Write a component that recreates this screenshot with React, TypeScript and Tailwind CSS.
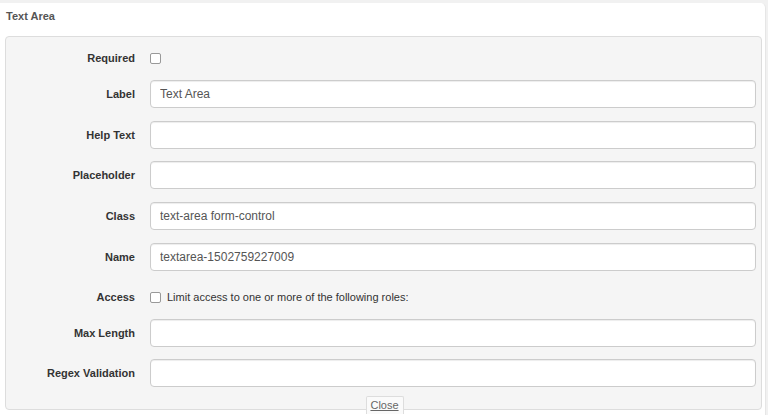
import React from 'react'

// ── Field rows ────────────────────────────────────────────────────────────────

function Row({ label, mt, h = 'h-[28px]', children }: { label: string; mt: string; h?: string; children: React.ReactNode }) {
  return (
    <div className={`flex items-center ${h} ${mt}`}>
      <label className="w-[130px] pr-[1px] text-right text-[11px] font-bold text-[#333]">{label}</label>
      <div className="ml-[14px] flex flex-1 items-center">{children}</div>
    </div>
  )
}

function TextInput({ value = '' }: { value?: string }) {
  return (
    <input
      type="text"
      defaultValue={value}
      className="h-[28px] w-[606px] rounded-[4px] border border-[#ccc] bg-white px-[9px] text-[12px] text-[#555] shadow-[inset_0_1px_1px_rgba(0,0,0,0.075)] outline-none"
    />
  )
}

function Check() {
  return <span className="inline-block h-[11px] w-[11px] rounded-[2px] border border-[#999] bg-white" />
}

export default function App() {
  return (
    <div className="h-[415px] w-[768px] bg-[#f1f1f1] pt-[3px] font-['Liberation_Sans',Arial,sans-serif]">
      <div className="h-[412px] w-[766px] rounded-tr-[5px] border-r border-[#e6e6e6] bg-white">
        <div className="flex h-[26px] items-center pl-[6px] text-[11px] font-bold text-[#555]">Text Area</div>

        <div className="ml-[5px] mt-[7px] h-[374px] w-[757px] rounded-[4px] border border-[#ddd] bg-[#f5f5f5] pt-[11px]">
          <Row label="Required" mt="mt-0" h="h-[20px]">
            <Check />
          </Row>
          <Row label="Label" mt="mt-[12px]">
            <TextInput value="Text Area" />
          </Row>
          <Row label="Help Text" mt="mt-[13px]">
            <TextInput />
          </Row>
          <Row label="Placeholder" mt="mt-[12px]">
            <TextInput />
          </Row>
          <Row label="Class" mt="mt-[13px]">
            <TextInput value="text-area form-control" />
          </Row>
          <Row label="Name" mt="mt-[13px]">
            <TextInput value="textarea-1502759227009" />
          </Row>
          <Row label="Access" mt="mt-[16px]" h="h-[20px]">
            <Check />
            <span className="ml-[6px] text-[11px] text-[#333]">Limit access to one or more of the following roles:</span>
          </Row>
          <Row label="Max Length" mt="mt-[12px]">
            <TextInput />
          </Row>
          <Row label="Regex Validation" mt="mt-[12px]">
            <TextInput />
          </Row>
        </div>

        <div className="-mt-[14px] flex justify-center pl-[4px]">
          <button className="h-[18px] w-[38px] rounded-t-[2px] border border-b-0 border-[#ddd] bg-[#fafafa] text-[11px] text-[#666] underline">
            Close
          </button>
        </div>
      </div>
    </div>
  )
}
